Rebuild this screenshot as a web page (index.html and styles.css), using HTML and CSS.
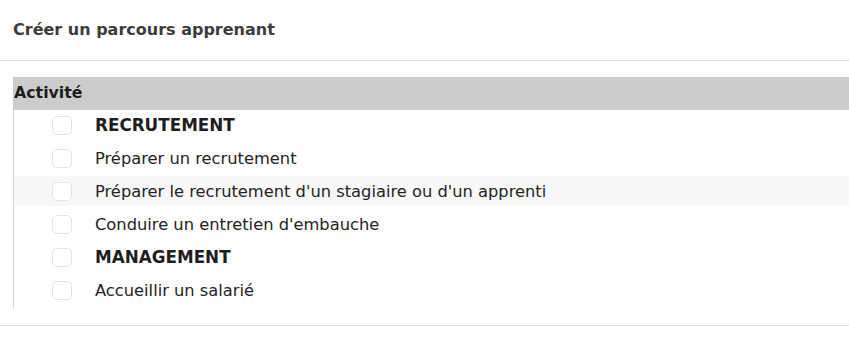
FILE: index.html
```html
<!DOCTYPE html>
<html lang="fr">
<head>
<meta charset="utf-8">
<title>Créer un parcours apprenant</title>
<link rel="stylesheet" href="styles.css">
</head>
<body>
  <header class="header">
    <h1 class="title">Créer un parcours apprenant</h1>
  </header>
  <section class="panel">
    <div class="band">Activité</div>
    <ul class="list">
      <li class="row"><span class="box"></span><span class="label strong">RECRUTEMENT</span></li>
      <li class="row"><span class="box"></span><span class="label">Préparer un recrutement</span></li>
      <li class="row hover"><span class="box"></span><span class="label">Préparer le recrutement d'un stagiaire ou d'un apprenti</span></li>
      <li class="row"><span class="box"></span><span class="label">Conduire un entretien d'embauche</span></li>
      <li class="row"><span class="box"></span><span class="label strong">MANAGEMENT</span></li>
      <li class="row"><span class="box"></span><span class="label">Accueillir un salarié</span></li>
    </ul>
  </section>
  <div class="footer"></div>
</body>
</html>
```
FILE: styles.css
```css
* { box-sizing: border-box; }
html, body { margin: 0; padding: 0; background: #ffffff; }
body {
  font-family: "DejaVu Sans", "Noto Sans", sans-serif;
  color: #222222;
  width: 849px;
}
.header {
  height: 61px;
  border-bottom: 1px solid #e2e2e2;
  padding: 20px 13px 0;
}
.title {
  margin: 0;
  font-size: 16px;
  line-height: 20px;
  font-weight: 700;
  color: #3c3c3c;
}
.panel {
  padding-top: 16px;
  padding-left: 13px;
}
.band {
  height: 33px;
  background: #cccccc;
  font-size: 15.8px;
  font-weight: 700;
  color: #1c1c1c;
  line-height: 32px;
  padding-left: 1px;
}
.list {
  list-style: none;
  margin: 0;
  padding: 0 0 3px;
  border-left: 1px solid #d2d2d2;
  display: flex;
  flex-direction: column;
  gap: 3px;
}
.row {
  height: 30px;
  display: flex;
  align-items: center;
  padding-left: 38px;
}
.row.hover { background: #f8f8f8; }
.box {
  width: 20px;
  height: 19px;
  border: 1px solid #e3e3e3;
  border-radius: 5px;
  background: #ffffff;
  flex: none;
}
.label {
  margin-left: 23px;
  font-size: 16.3px;
  color: #242424;
  white-space: nowrap;
}
.label.strong { font-weight: 700; color: #1e1e1e; font-size: 16.8px; }
.footer {
  margin-top: 17px;
  border-top: 1px solid #dedede;
}
```
